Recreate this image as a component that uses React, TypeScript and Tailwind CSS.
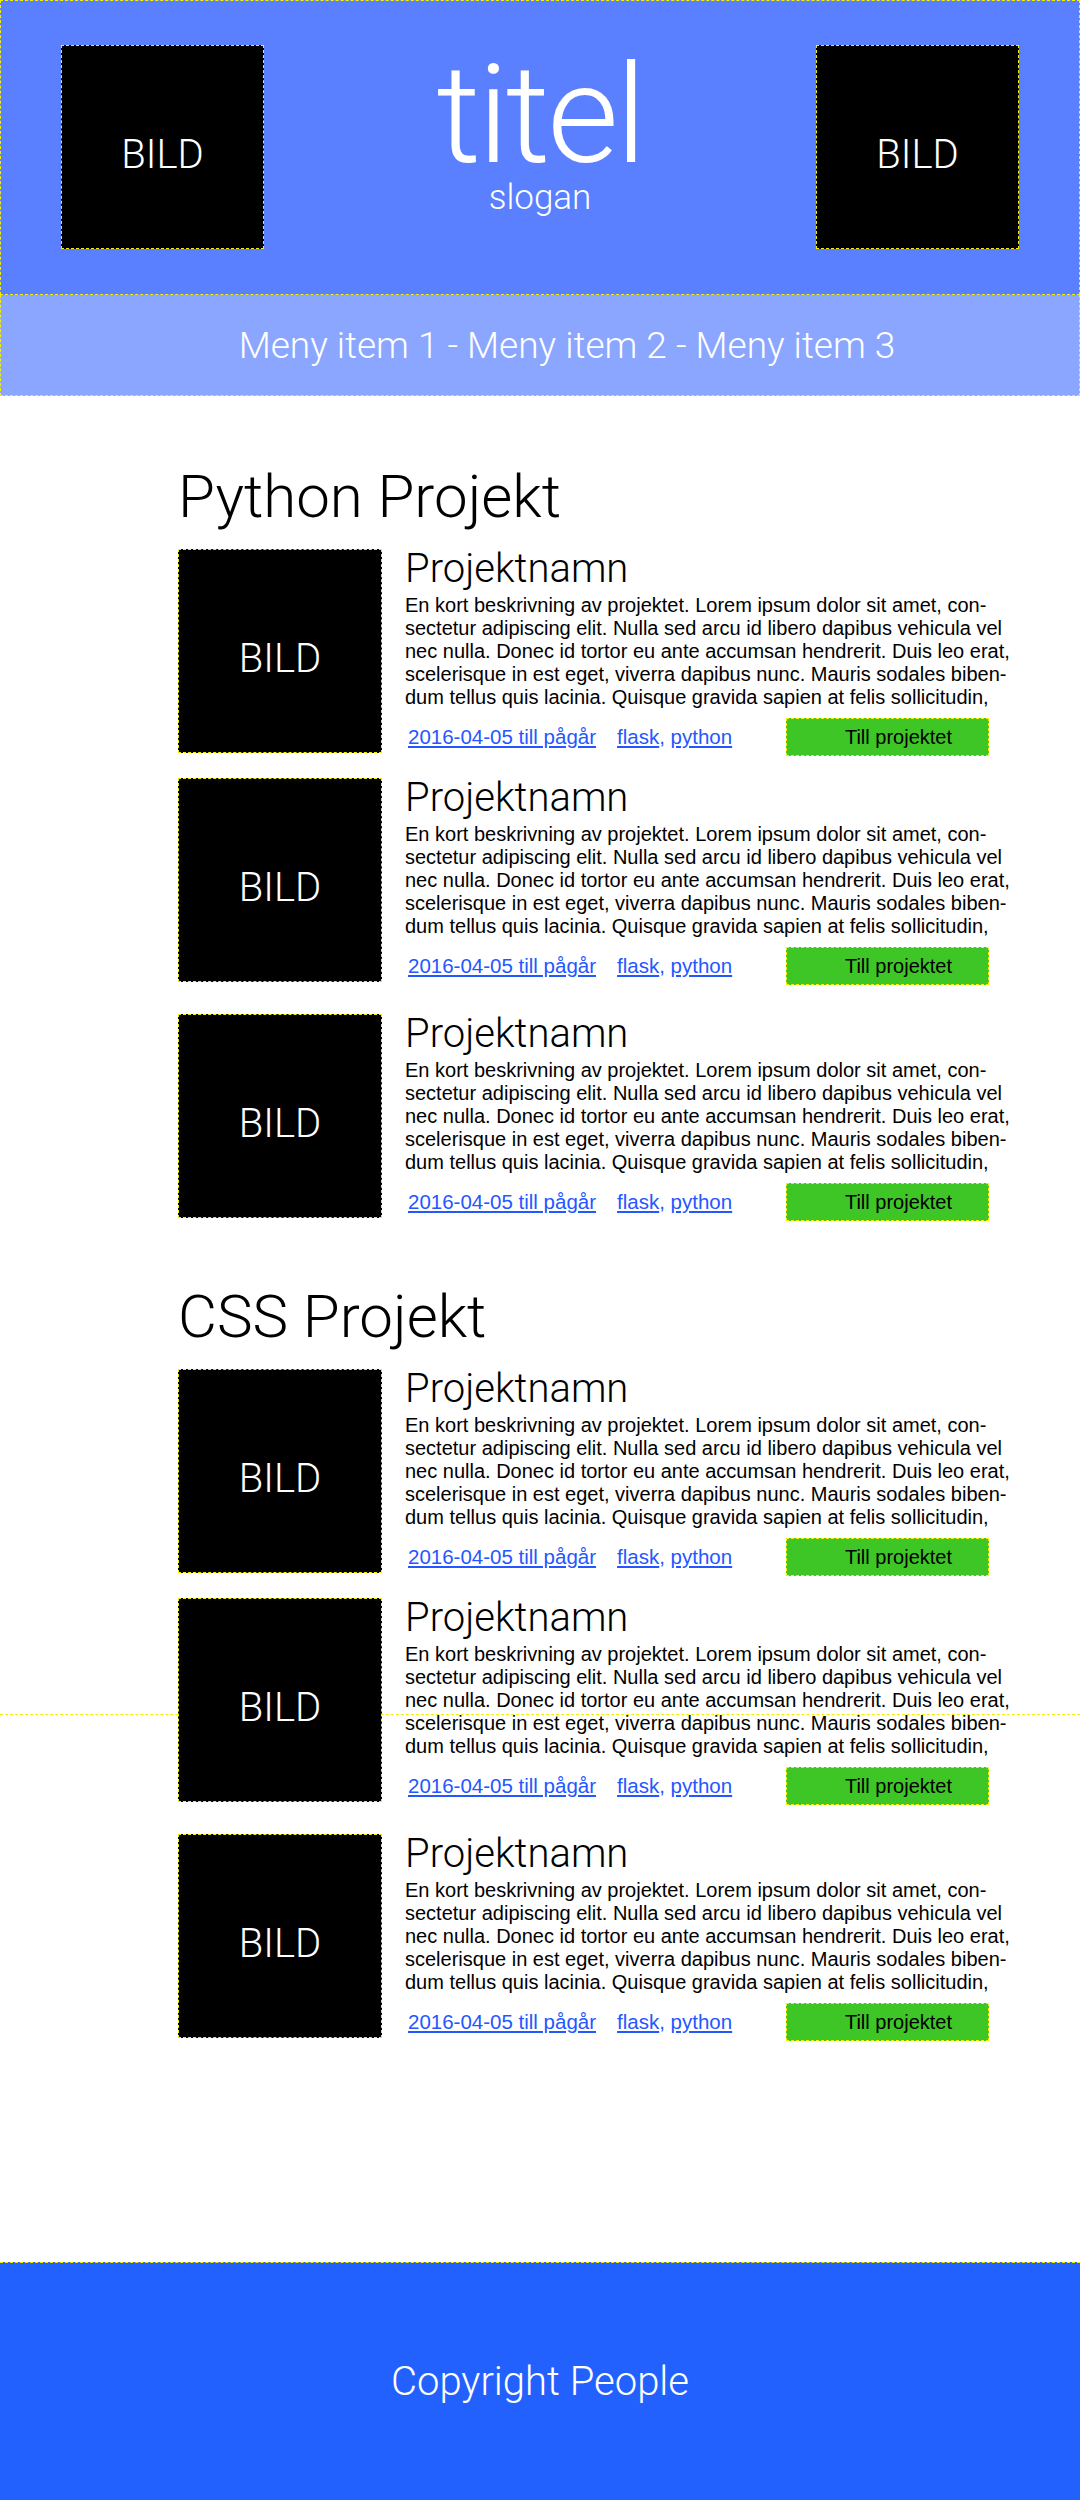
import React from "react";

const LIGHT = "font-['Roboto','Liberation_Sans',sans-serif] font-light";
const BODY = "font-['Liberation_Sans','Arial',sans-serif]";

const DESCRIPTION = [
  "En kort beskrivning av projektet. Lorem ipsum dolor sit amet, con-",
  "sectetur adipiscing elit. Nulla sed arcu id libero dapibus vehicula vel",
  "nec nulla. Donec id tortor eu ante accumsan hendrerit. Duis leo erat,",
  "scelerisque in est eget, viverra dapibus nunc. Mauris sodales biben-",
  "dum tellus quis lacinia. Quisque gravida sapien at felis sollicitudin,",
];

// gaps between the image boxes, as measured on the mockup
const CARD_GAPS = ["mt-[22px]", "mt-[25px]", "mt-[32px]"];

function Bild({ className = "" }: { className?: string }) {
  return (
    <div
      className={`flex shrink-0 items-center justify-center border border-dashed border-[#f4f000] bg-black pt-[16px] text-[40px] leading-none text-white ${LIGHT} ${className}`}
    >
      BILD
    </div>
  );
}

function ProjectCard({ gap }: { gap: string }) {
  return (
    <div className={`relative flex h-[204px] gap-[23px] ${gap}`}>
      <Bild className="h-[204px] w-[204px]" />
      <div className="flex w-[584px] flex-col">
        <h3 className={`text-[40px] leading-none text-black ${LIGHT}`}>Projektnamn</h3>
        <div className={`mt-[5px] text-[20px] leading-[23px] text-black ${BODY}`}>
          {DESCRIPTION.map((line) => (
            <p key={line} className="whitespace-nowrap">
              {line}
            </p>
          ))}
        </div>
        <div className={`mt-[9px] flex items-center ${BODY}`}>
          <a href="#" className="ml-[3px] text-[20.5px] text-[#2457ff] underline">
            2016-04-05 till pågår
          </a>
          <span className="ml-[21px] text-[20.5px] text-[#2457ff]">
            <a href="#" className="underline">flask</a>,{" "}
            <a href="#" className="underline">python</a>
          </span>
          <button className="ml-auto flex h-[38px] w-[203px] items-center justify-center border border-dashed border-[#f4f000] bg-[#3ec626] pl-[22px] text-[20px] text-black">
            Till projektet
          </button>
        </div>
      </div>
    </div>
  );
}

function Section({ title, first }: { title: string; first?: boolean }) {
  return (
    <section className={first ? "" : "mt-[69px]"}>
      <h2 className={`text-[60px] leading-none text-black ${LIGHT}`}>{title}</h2>
      {CARD_GAPS.map((gap, i) => (
        <ProjectCard key={i} gap={gap} />
      ))}
    </section>
  );
}

export default function App() {
  return (
    <div className="relative min-h-[2500px] w-[1080px] bg-white">
      {/* guide line that runs across the mockup */}
      <div className="absolute left-0 right-0 top-[1714px] border-t border-dashed border-[#f4f000]" />

      <header className="relative flex h-[295px] items-start justify-between border border-dashed border-[#f4f000] bg-[#5a80ff] px-[60px] pt-[44px]">
        <Bild className="h-[204px] w-[203px]" />
        <div className="flex flex-col items-center text-white">
          <h1 className={`mt-[1px] text-[138px] leading-none tracking-[-3px] ${LIGHT}`}>titel</h1>
          <p className={`-mt-[4px] text-[35px] leading-none ${LIGHT}`}>slogan</p>
        </div>
        <Bild className="h-[204px] w-[203px]" />
      </header>

      <nav className="relative flex h-[101px] items-center justify-center border border-t-0 border-dashed border-[#f4f000] bg-[#8aa6ff] pl-[54px]">
        <span className={`text-[37px] leading-none text-white ${LIGHT}`}>
          Meny item 1 - Meny item 2 - Meny item 3
        </span>
      </nav>

      <main className="relative h-[1866px] pl-[178px] pt-[71px]">
        <Section title="Python Projekt" first />
        <Section title="CSS Projekt" />
      </main>

      <footer className="relative flex h-[238px] items-center justify-center border-t border-dashed border-[#f4f000] bg-[#2361ff]">
        <span className={`text-[40px] leading-none text-white ${LIGHT}`}>Copyright People</span>
      </footer>
    </div>
  );
}
